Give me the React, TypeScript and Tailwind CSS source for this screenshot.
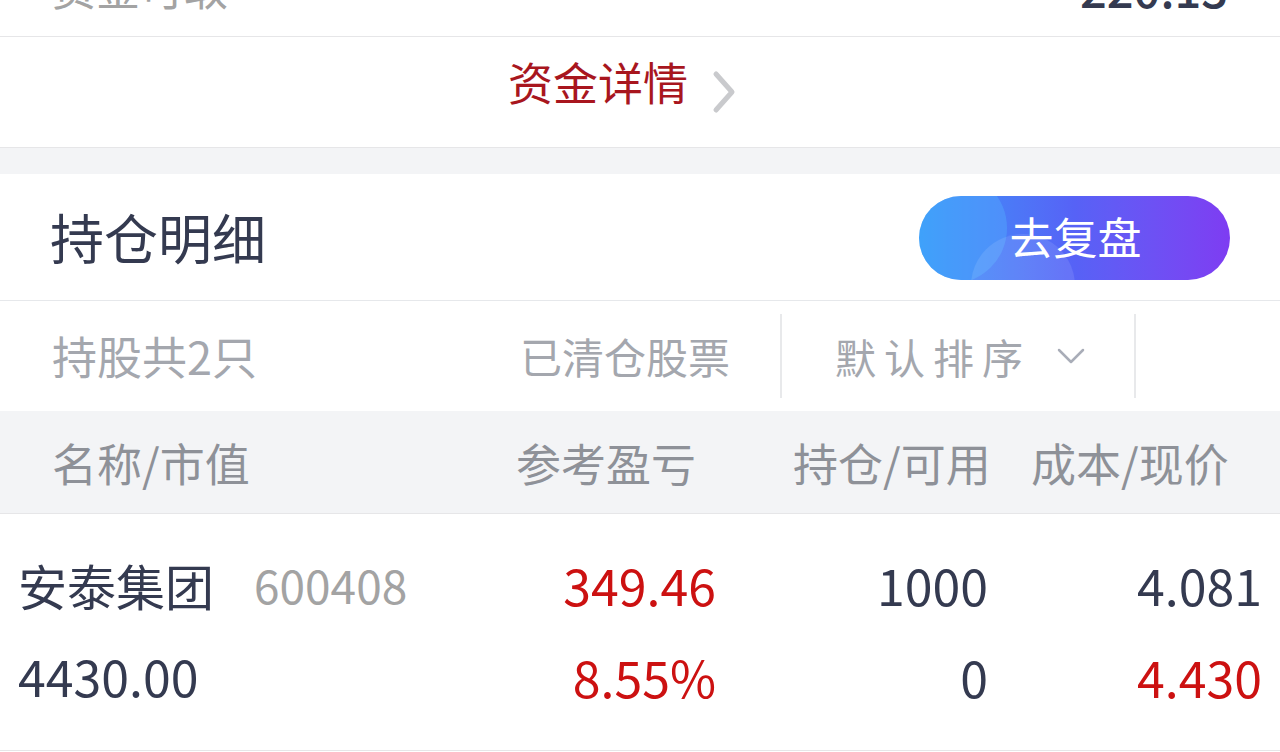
import React from "react";

const cjk = { fontFamily: '"Noto Sans CJK SC", "Noto Sans", sans-serif' };
const num = { fontFamily: '"Noto Sans CJK SC", "Noto Sans", sans-serif' };

export default function App() {
  return (
    <div className="w-[1280px] h-[752px] overflow-hidden bg-white" style={cjk}>
      {/* cut-off top row */}
      <div className="-mt-[62px] h-[99px] flex items-center justify-between pl-[52px] pr-[52px] border-b border-[#e6e6e8]">
        <span className="text-[44px] text-[#a3a3a3] leading-none">资金可取</span>
        <span className="text-[47px] text-[#343a50] font-medium leading-none" style={num}>220.13</span>
      </div>

      {/* 资金详情 */}
      <div className="h-[111px] flex justify-center items-start pt-[21px] pr-[34px] border-b border-[#e6e6e8] gap-[22px]">
        <span className="text-[45px] leading-[48px] text-[#a8161e]">资金详情</span>
        <svg width="28" height="44" viewBox="0 0 28 44" className="mt-[12px]">
          <path d="M6 4 L22 22 L6 40" fill="none" stroke="#c9cacd" strokeWidth="5" strokeLinecap="round" strokeLinejoin="round" />
        </svg>
      </div>

      <div className="h-[26px] bg-[#f3f4f6]" />

      {/* 持仓明细 */}
      <div className="h-[127px] flex items-center justify-between pl-[50px] pr-[50px] border-b border-[#e6e8eb]">
        <span className="text-[54px] leading-none text-[#343a50]">持仓明细</span>
        <div className="relative overflow-hidden w-[311px] h-[84px] rounded-full bg-gradient-to-r from-[#3396f8] via-[#5662f6] to-[#7e3cf2] flex items-center justify-center mt-[2px]">
          <div className="absolute -left-[24px] -top-[24px] w-[112px] h-[112px] rounded-full bg-[#56b6ff]/35" />
          <div className="absolute left-[52px] top-[38px] w-[104px] h-[104px] rounded-full bg-white/10" />
          <span className="relative text-[44px] leading-none text-white pl-[2px] -mt-[4px]">去复盘</span>
        </div>
      </div>

      {/* filter row */}
      <div className="h-[110px] flex items-center">
        <div className="w-[470px] pl-[52px]">
          <span className="text-[45px] leading-none text-[#a4a7ae]">持股共2只</span>
        </div>
        <div className="w-[310px] h-[84px] flex items-center pl-[50px]">
          <span className="text-[42px] leading-none text-[#a4a7ae]">已清仓股票</span>
        </div>
        <div className="w-[356px] h-[84px] flex items-center border-l-2 border-r-2 border-[#e8e9eb] pl-[53px]">
          <span className="text-[41px] leading-none text-[#a4a7ae] tracking-[8px]">默认排序</span>
          <svg width="28" height="16" viewBox="0 0 28 16" className="ml-[26px]">
            <path d="M2 2 L14 14 L26 2" fill="none" stroke="#a9adb8" strokeWidth="2.5" strokeLinecap="round" strokeLinejoin="round" />
          </svg>
        </div>
      </div>

      {/* header row */}
      <div className="h-[103px] bg-[#f3f4f6] flex items-center pl-[52px] border-b border-[#e6e6e8] text-[45px] leading-none text-[#8e9198]">
        <span className="flex-1">名称/市值</span>
        <span className="w-[277px]">参考盈亏</span>
        <span className="w-[238px]">持仓/可用</span>
        <span className="w-[249px]">成本/现价</span>
      </div>

      {/* data rows */}
      <div className="border-b border-[#e6e6e8] pt-[24px] pb-[28px] px-[18px]">
        <div className="h-[92px] flex items-center">
          <div className="flex-1 flex items-center">
            <span className="text-[49px] leading-none text-[#343a50]">安泰集团</span>
            <span className="ml-[40px] text-[46px] leading-none text-[#a3a3a3]" style={num}>600408</span>
          </div>
          <span className="w-[200px] text-right text-[50px] leading-none text-[#cc1111]" style={num}>349.46</span>
          <span className="w-[272px] text-right text-[50px] leading-none text-[#343a50]" style={num}>1000</span>
          <span className="w-[274px] text-right text-[50px] leading-none text-[#343a50]" style={num}>4.081</span>
        </div>
        <div className="h-[92px] flex items-center">
          <div className="flex-1">
            <span className="text-[50px] leading-none text-[#343a50]" style={num}>4430.00</span>
          </div>
          <span className="w-[200px] text-right text-[50px] leading-none text-[#cc1111]" style={num}>8.55%</span>
          <span className="w-[272px] text-right text-[50px] leading-none text-[#343a50]" style={num}>0</span>
          <span className="w-[274px] text-right text-[50px] leading-none text-[#cc1111]" style={num}>4.430</span>
        </div>
      </div>
    </div>
  );
}
